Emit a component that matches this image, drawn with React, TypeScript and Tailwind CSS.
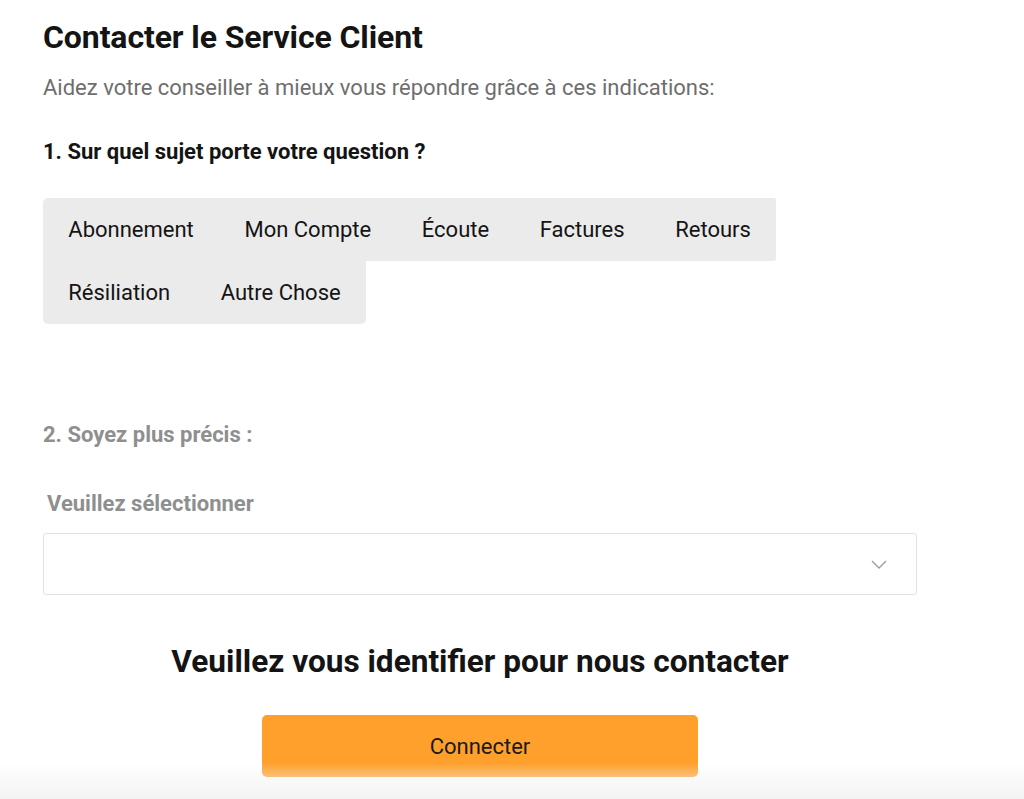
import React from "react";

const topics1 = ["Abonnement", "Mon Compte", "Écoute", "Factures", "Retours"];
const topics2 = ["Résiliation", "Autre Chose"];

export default function App() {
  return (
    <div
      className="relative min-h-[799px] w-[1024px] bg-white text-[#141414] overflow-hidden"
      style={{ fontFamily: "Roboto, 'Noto Sans', sans-serif" }}
    >
      <div className="ml-[43px] w-[874px] pt-[20px]">
        <h1 className="text-[32px] leading-[34px] font-bold tracking-[-0.1px]">
          Contacter le Service Client
        </h1>
        <p className="mt-[20px] text-[22px] leading-[28px] text-[#6e6e6e]">
          Aidez votre conseiller à mieux vous répondre grâce à ces indications:
        </p>
        <h2 className="mt-[36px] text-[22px] leading-[28px] font-bold">
          1. Sur quel sujet porte votre question ?
        </h2>

        <div className="mt-[32px] flex flex-col">
          <div className="flex">
            {topics1.map((t, i) => (
              <div
                key={t}
                className={
                  "h-[63px] flex items-center px-[25.3px] bg-[#ebebeb] text-[22px] " +
                  (i === 0 ? "rounded-tl-[5px]" : "") +
                  (i === topics1.length - 1 ? " rounded-tr-[2px] rounded-br-[2px]" : "")
                }
              >
                {t}
              </div>
            ))}
          </div>
          <div className="flex">
            {topics2.map((t, i) => (
              <div
                key={t}
                className={
                  "h-[63px] flex items-center px-[25.3px] bg-[#ebebeb] text-[22px] " +
                  (i === 0 ? "rounded-bl-[5px]" : "rounded-br-[5px]")
                }
              >
                {t}
              </div>
            ))}
          </div>
        </div>

        <h3 className="mt-[97px] text-[22px] leading-[28px] font-bold text-[#8f8f8f]">
          2. Soyez plus précis :
        </h3>
        <div className="mt-[41px] ml-[4px] text-[22px] leading-[28px] font-bold text-[#8f8f8f]">
          Veuillez sélectionner
        </div>
        <div className="mt-[15px] h-[62px] rounded-[3px] border border-[#e2e2e2] flex items-center justify-end pr-[29px]">
          <svg width="16" height="9" viewBox="0 0 16 9" fill="none">
            <path d="M1 1l7 7 7-7" stroke="#9a9a9a" strokeWidth="1.3" />
          </svg>
        </div>

        <div className="mt-[47px] text-center text-[31.6px] leading-[40px] font-bold">
          Veuillez vous identifier pour nous contacter
        </div>
        <div className="mt-[33px] flex justify-center">
          <button className="w-[436px] h-[62px] rounded-[5px] bg-[#ffa02c] text-[22px] text-[#1a1a1a]">
            Connecter
          </button>
        </div>
      </div>
      <div className="absolute left-0 right-0 bottom-0 h-[36px] bg-gradient-to-b from-transparent to-[#f3f3f3] pointer-events-none" />
    </div>
  );
}
